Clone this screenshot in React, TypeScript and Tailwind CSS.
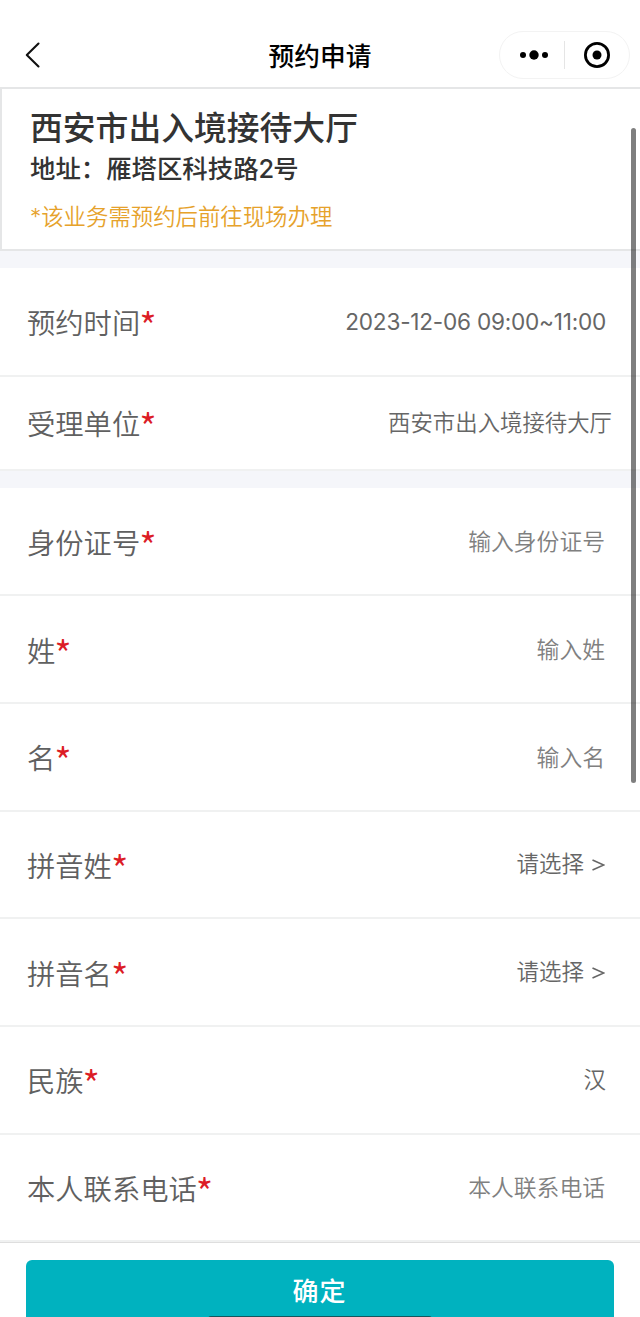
type RowProps = {
  label: string;
  value: string;
  kind?: 'text' | 'placeholder' | 'select' | 'unit' | 'date';
  size?: string;
};

const tones = {
  text: 'mr-[34px] text-[22.5px] text-[#666]',
  placeholder: 'mr-[35px] pt-0.5 text-[22.8px] text-[#808080]',
  select: 'mr-[35px] text-[22.5px] text-[#666]',
  unit: 'mr-[28px] text-[22.4px] text-[#666]',
  date: 'mr-[34px] pt-px text-[22.6px] tracking-[-0.23px] text-[#666]',
};

function Row({ label, value, kind = 'text', size = 'h-[107.7px]' }: RowProps) {
  return (
    <div className={`${size} flex shrink-0 items-center justify-between border-b-2 border-[#f0f1f1] bg-white pl-[27px]`}>
      <div className="flex h-[43px] pt-1 text-[28.3px] leading-10 text-[#606060]">
        <span className="font-[350]">{label}</span>
        <span className="-ml-px mt-px font-['Noto_Sans_CJK_SC',sans-serif] text-[38px] font-[350] text-[#dc1c26]">*</span>
      </div>
      <div className={`${tones[kind]} flex items-center whitespace-pre leading-8`}>
        <span className={kind === 'date' ? 'font-normal' : 'font-[350]'}>{value}</span>
        {kind === 'select' && (
          <svg className="ml-2 mt-0.5 h-3 w-[13px]" viewBox="0 0 13 12" fill="none" stroke="currentColor" strokeWidth="1.6">
            <path d="M.5 1 11.8 6 .5 11" />
          </svg>
        )}
      </div>
    </div>
  );
}

export default function App() {
  return (
    <div className="relative flex h-[1317px] w-[640px] flex-col overflow-hidden bg-white font-['Inter','Noto_Sans_CJK_SC',sans-serif]">
      <header className="grid h-[87px] shrink-0 grid-cols-3 items-center pt-[23px]">
        <svg className="ml-[25px] h-[26px] w-4" viewBox="0 0 16 26" fill="none" stroke="#111" strokeWidth="2.1" strokeLinecap="round" strokeLinejoin="round">
          <path d="M13.5 1.5 1.8 13l11.7 11.5" />
        </svg>
        <h1 className="pt-[3px] text-center text-[25.7px] font-medium leading-9 text-black">预约申请</h1>
        <div className="mr-[10px] flex h-12 w-[131px] items-center justify-self-end rounded-full border border-[#f3f3f3]">
          <svg className="ml-5 h-3 w-7" viewBox="0 0 28 12" fill="#000">
            <circle cx="3" cy="6" r="3" />
            <circle cx="14" cy="6" r="4.7" />
            <circle cx="25" cy="6" r="3" />
          </svg>
          <div className="ml-4 h-7 w-px bg-[#e5e5e5]" />
          <svg className="ml-[19px] h-[26px] w-[26px]" viewBox="0 0 26 26">
            <circle cx="13" cy="13" r="11.6" fill="none" stroke="#000" strokeWidth="2.8" />
            <circle cx="13" cy="13" r="4.5" />
          </svg>
        </div>
      </header>

      <section className="h-[164px] shrink-0 border-y-2 border-l-2 border-[#e5e6e7] pl-7 pt-[17px] text-[#333]">
        <h2 className="text-[32.8px] font-medium leading-[44px]">西安市出入境接待大厅</h2>
        <p className="text-[25.4px] font-medium leading-[38px]">地址：雁塔区科技路<span className="tracking-[-1px]">2</span>号</p>
        <p className="mt-[11px] text-[22.4px] font-[350] leading-9 text-[#e6a22b]">*该业务需预约后前往现场办理</p>
      </section>

      <div className="h-[17px] shrink-0 bg-[#f5f6fa]" />
      <Row label="预约时间" value="2023-12-06 09:00~11:00" kind="date" size="h-[108.5px]" />
      <Row label="受理单位" value="西安市出入境接待大厅" kind="unit" size="h-[94px]" />
      <div className="h-[17.5px] shrink-0 bg-[#f5f6fa]" />

      <Row label="身份证号" value="输入身份证号" kind="placeholder" size="h-[108.2px]" />
      <Row label="姓" value="输入姓" kind="placeholder" />
      <Row label="名" value="输入名" kind="placeholder" />
      <Row label="拼音姓" value="请选择" kind="select" />
      <Row label="拼音名" value="请选择" kind="select" />
      <Row label="民族" value="汉" />
      <Row label="本人联系电话" value="本人联系电话" kind="placeholder" size="h-[107.4px]" />

      <footer className="flex flex-1 flex-col border-t border-[#dedede] px-[26px] pt-[17px]">
        <button className="h-[70px] shrink-0 rounded-md bg-[#00b2bf] pb-[7px] pr-px text-[26px] font-medium leading-9 tracking-[1px] text-white">
          确定
        </button>
      </footer>

      <div className="absolute left-[631px] top-[128px] h-[655px] w-[5px] rounded-full bg-black/50" />
      <div className="absolute left-[208px] top-[1316px] h-1.5 w-[224px] rounded-full bg-[#14565c]" />
    </div>
  );
}
